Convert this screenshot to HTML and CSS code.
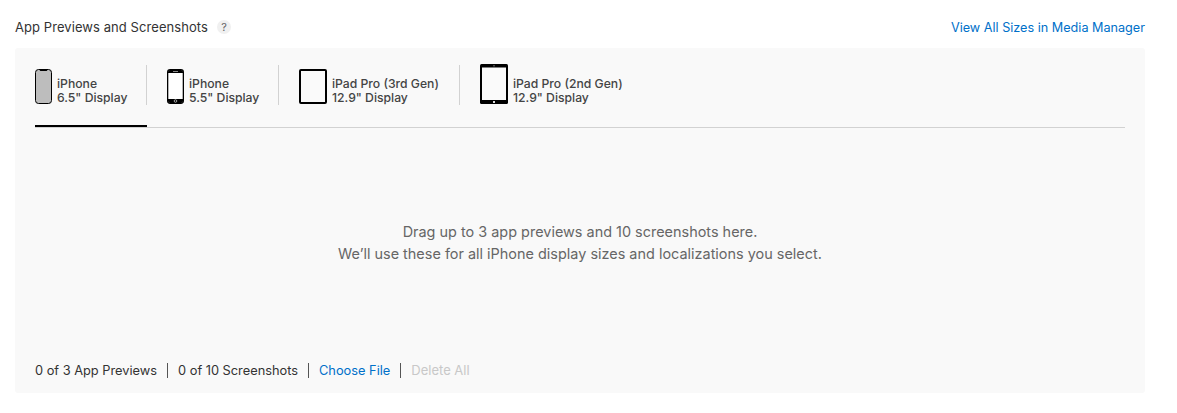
FILE: index.html
```html
<!DOCTYPE html>
<html lang="en">
<head>
    <meta charset="UTF-8">
    <title>App Previews and Screenshots</title>
    <link rel="stylesheet" href="styles.css">
</head>
<body>
<div class="section">
    <div class="header">
        <div class="title">
            <h2>App Previews and Screenshots</h2>
            <span class="help">?</span>
        </div>
        <a class="link" href="#">View All Sizes in Media Manager</a>
    </div>
    <div class="panel">
        <div class="tabs">
            <div class="tab active">
                <svg class="device" width="17" height="35" viewBox="0 0 17 35">
                    <rect x="0.5" y="0.5" width="16" height="34" rx="3" fill="#bdbdbd" stroke="#000"/>
                    <path d="M4.5 1h8l-.8 1H5.300z" fill="#000"/>
                </svg>
                <div class="tab_label">iPhone<br>6.5" Display</div>
            </div>
            <div class="tab">
                <svg class="device" width="17" height="35" viewBox="0 0 17 35">
                    <rect x="0.650" y="0.650" width="15.700" height="33.700" rx="2.500" fill="#fff" stroke="#000" stroke-width="1.300"/>
                    <path d="M1 4V3a2 2 0 0 1 2-2h11a2 2 0 0 1 2 2v1z" fill="#000"/>
                    <path d="M1 30h15v2a2 2 0 0 1-2 2H3a2 2 0 0 1-2-2z" fill="#000"/>
                    <rect x="6" y="2" width="5" height="1" fill="#888"/>
                    <circle cx="8.500" cy="32" r="1.300" fill="#000" stroke="#ddd" stroke-width="0.700"/>
                </svg>
                <div class="tab_label">iPhone<br>5.5" Display</div>
            </div>
            <div class="tab">
                <svg class="device" width="28" height="35" viewBox="0 0 28 35">
                    <rect x="1" y="1" width="26" height="33" rx="1" fill="#fafafa" stroke="#000" stroke-width="2"/>
                </svg>
                <div class="tab_label">iPad Pro (3rd Gen)<br>12.9" Display</div>
            </div>
            <div class="tab">
                <svg class="device" width="28" height="40" viewBox="0 0 28 40">
                    <rect width="28" height="40" rx="1.500" fill="#000"/>
                    <rect x="2" y="3.500" width="24" height="32.500" fill="#fafafa"/>
                    <rect x="13" y="1" width="2" height="1.500" fill="#444"/>
                    <rect x="13" y="37" width="2" height="2" fill="#ddd"/>
                </svg>
                <div class="tab_label">iPad Pro (2nd Gen)<br>12.9" Display</div>
            </div>
        </div>
        <div class="dropzone">
            <p>Drag up to 3 app previews and 10 screenshots here.</p>
            <p>We’ll use these for all iPhone display sizes and localizations you select.</p>
        </div>
        <div class="footer">
            <span class="count">0 of 3 App Previews</span>
            <span class="count">0 of 10 Screenshots</span>
            <a class="count link" href="#">Choose File</a>
            <span class="count disabled">Delete All</span>
        </div>
    </div>
</div>
</body>
</html>
```

FILE: styles.css
```css
* {
    box-sizing: border-box;
}
body {
    margin: 0;
    background-color: #fff;
    font-family: "Inter", "Liberation Sans", sans-serif;
    color: #333;
}
.section {
    width: 1130px;
    margin-left: 15px;
}
.header {
    display: flex;
    justify-content: space-between;
    align-items: center;
    height: 48px;
    padding-top: 6px;
}
.title {
    display: flex;
    align-items: center;
    gap: 9px;
}
h2 {
    margin: 0;
    font-size: 13px;
    font-weight: 400;
    letter-spacing: 0.07px;
    color: #333;
}
.help {
    width: 14px;
    height: 14px;
    border-radius: 50%;
    background-color: #f0f0f0;
    color: #666;
    font-size: 11px;
    line-height: 14px;
    text-align: center;
}
.link {
    color: #0070c9;
    font-size: 12.65px;
    text-decoration: none;
}
.panel {
    height: 345px;
    padding: 15px 20px 0;
    background-color: #f9f9f9;
    border-radius: 3px;
    display: flex;
    flex-direction: column;
}
.tabs {
    display: flex;
    height: 65px;
    border-bottom: 1px solid #d2d2d2;
}
.tab {
    display: flex;
    align-items: flex-end;
    gap: 5px;
    height: 64px;
    padding-left: 21px;
    padding-bottom: 23px;
    position: relative;
}
.tab:nth-child(1) {
    width: 111px;
    padding-left: 0;
}
.tab:nth-child(2) {
    width: 132px;
}
.tab:nth-child(3) {
    width: 181px;
}
.tab + .tab::before {
    content: "";
    position: absolute;
    left: 0;
    top: 2px;
    height: 40px;
    border-left: 1px solid #d2d2d2;
}
.tab.active::after {
    content: "";
    position: absolute;
    left: 0;
    right: -1px;
    bottom: 0;
    border-bottom: 2px solid #000;
}
.device {
    flex-shrink: 0;
}
.tab_label {
    font-size: 12.2px;
    font-weight: 500;
    line-height: 14px;
    color: #444;
    white-space: nowrap;
    margin-bottom: -1px;
}
.dropzone {
    flex: 1;
    display: flex;
    flex-direction: column;
    align-items: center;
    padding-top: 93px;
    font-size: 14.45px;
    line-height: 22px;
    color: #666;
}
.dropzone p {
    margin: 0;
}
.footer {
    display: flex;
    align-items: center;
    height: 46px;
    font-size: 12.8px;
}
.count {
    padding: 0 10px;
    line-height: 15px;
    border-left: 1px solid #555;
    color: #333;
}
.count:first-child {
    padding-left: 0;
    border-left: none;
}
.count.link {
    color: #0070c9;
    font-size: inherit;
}
.count.disabled {
    color: #c8c8c8;
    font-size: 13px;
}
```
